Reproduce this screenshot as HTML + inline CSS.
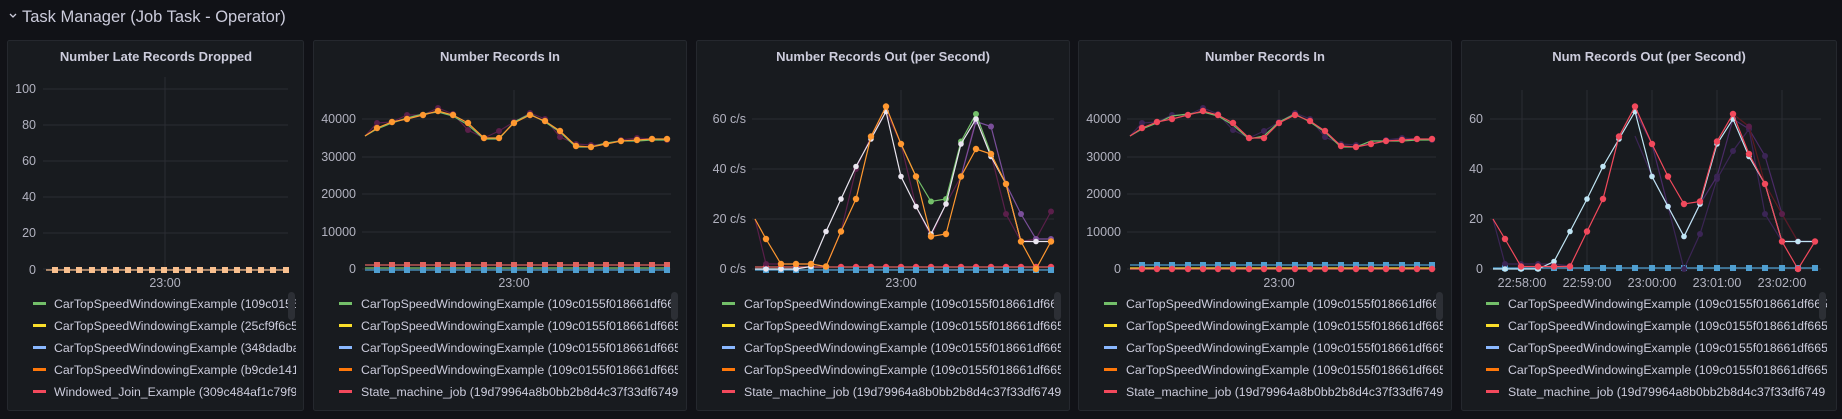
<!DOCTYPE html>
<html><head><meta charset="utf-8"><style>
html,body{margin:0;padding:0;background:#111217;width:1842px;height:419px;overflow:hidden}
svg{display:block;font-family:"Liberation Sans",sans-serif}
.pt{fill:#ccccdc;font-size:13px;font-weight:bold;text-anchor:middle}
.ax{fill:#ccccdc;fill-opacity:.85;font-size:12.5px}
.ar{text-anchor:end}
.am{text-anchor:middle}
.lg{fill:#ccccdc;font-size:12.3px}
.g{stroke:#2a2d33;stroke-width:1}
.s{fill:none;stroke-width:1.2}
</style></head><body>
<svg width="1842" height="419" viewBox="0 0 1842 419" xmlns="http://www.w3.org/2000/svg">
<defs>
<marker id="mo" markerUnits="userSpaceOnUse" markerWidth="8" markerHeight="8" refX="4" refY="4"><circle cx="4" cy="4" r="3.2" fill="#ff9830"/></marker>
<marker id="mr" markerUnits="userSpaceOnUse" markerWidth="8" markerHeight="8" refX="4" refY="4"><circle cx="4" cy="4" r="3.2" fill="#f2495c"/></marker>
<marker id="mw" markerUnits="userSpaceOnUse" markerWidth="8" markerHeight="8" refX="4" refY="4"><circle cx="4" cy="4" r="2.8" fill="#eae6f0"/></marker>
<marker id="mlb" markerUnits="userSpaceOnUse" markerWidth="8" markerHeight="8" refX="4" refY="4"><circle cx="4" cy="4" r="2.8" fill="#c0e6f5"/></marker>
<marker id="mg" markerUnits="userSpaceOnUse" markerWidth="8" markerHeight="8" refX="4" refY="4"><circle cx="4" cy="4" r="3" fill="#73bf69"/></marker>
<marker id="mp" markerUnits="userSpaceOnUse" markerWidth="8" markerHeight="8" refX="4" refY="4"><circle cx="4" cy="4" r="3" fill="#5a1f4a"/></marker>
<marker id="mpu" markerUnits="userSpaceOnUse" markerWidth="8" markerHeight="8" refX="4" refY="4"><circle cx="4" cy="4" r="3" fill="#3b2555"/></marker>
<marker id="mpk" markerUnits="userSpaceOnUse" markerWidth="8" markerHeight="8" refX="3" refY="3"><rect width="6" height="6" fill="#f9c08f"/></marker>
<marker id="msr" markerUnits="userSpaceOnUse" markerWidth="8" markerHeight="8" refX="3" refY="3"><rect width="6" height="6" fill="#e0645f"/></marker>
<marker id="msb" markerUnits="userSpaceOnUse" markerWidth="8" markerHeight="8" refX="3" refY="3"><rect width="6" height="6" fill="#4f9fd1"/></marker>
<marker id="mpurp" markerUnits="userSpaceOnUse" markerWidth="8" markerHeight="8" refX="4" refY="4"><circle cx="4" cy="4" r="3" fill="#7a4f9a"/></marker>
<clipPath id="c1"><rect x="8" y="290" width="288" height="115"/></clipPath>
<clipPath id="c2"><rect x="314" y="290" width="364" height="115"/></clipPath>
<clipPath id="c3"><rect x="697" y="290" width="364" height="115"/></clipPath>
<clipPath id="c4"><rect x="1079" y="290" width="364" height="115"/></clipPath>
<clipPath id="c5"><rect x="1462" y="290" width="365" height="115"/></clipPath>
</defs>

<path d="M10 14 L13 17 L16 14" fill="none" stroke="#ccccdc" stroke-width="1.3"/>
<text x="22" y="22" fill="#ccccdc" font-size="16.5px">Task Manager (Job Task - Operator)</text>

<g fill="#181b1f" stroke="#25282e">
<rect x="7.5" y="40.5" width="296" height="370" rx="2"/>
<rect x="313.5" y="40.5" width="373" height="370" rx="2"/>
<rect x="696.5" y="40.5" width="373" height="370" rx="2"/>
<rect x="1078.5" y="40.5" width="373" height="370" rx="2"/>
<rect x="1461.5" y="40.5" width="375" height="370" rx="2"/>
</g>
<text class="pt" x="156" y="61">Number Late Records Dropped</text>
<text class="pt" x="500" y="61">Number Records In</text>
<text class="pt" x="883" y="61">Number Records Out (per Second)</text>
<text class="pt" x="1265" y="61">Number Records In</text>
<text class="pt" x="1649" y="61">Num Records Out (per Second)</text>

<g class="g"><line x1="43" y1="89" x2="288" y2="89"/><line x1="43" y1="125" x2="288" y2="125"/><line x1="43" y1="161" x2="288" y2="161"/><line x1="43" y1="197" x2="288" y2="197"/><line x1="43" y1="233" x2="288" y2="233"/><line x1="43" y1="269" x2="288" y2="269"/><line x1="165" y1="77" x2="165" y2="272"/></g>
<g class="ax ar"><text x="36" y="93">100</text><text x="36" y="129">80</text><text x="36" y="165">60</text><text x="36" y="201">40</text><text x="36" y="237">20</text><text x="36" y="274">0</text></g>
<text class="ax am" x="165" y="287">23:00</text>
<polyline class="s" stroke="#f9c08f" marker-mid="url(#mpk)" marker-end="url(#mpk)" points="46,270 55,270 67,270 79,270 92,270 104,270 116,270 128,270 140,270 152,270 164,270 176,270 188,270 200,270 213,270 225,270 237,270 249,270 261,270 273,270 286,270"/>

<g class="g"><line x1="362" y1="119" x2="671" y2="119"/><line x1="362" y1="157" x2="671" y2="157"/><line x1="362" y1="194" x2="671" y2="194"/><line x1="362" y1="232" x2="671" y2="232"/><line x1="362" y1="269" x2="671" y2="269"/><line x1="514" y1="90" x2="514" y2="272"/></g>
<g class="ax ar"><text x="356" y="123">40000</text><text x="356" y="161">30000</text><text x="356" y="198">20000</text><text x="356" y="236">10000</text><text x="356" y="273">0</text></g>
<text class="ax am" x="514" y="287">23:00</text>
<polyline class="s" stroke="#e0645f" marker-mid="url(#msr)" marker-end="url(#msr)" points="365,265 377,265 392,265 407,265 423,265 438,265 453,265 468,265 484,265 499,265 514,265 530,265 545,265 560,265 576,265 591,265 606,265 621,265 637,265 652,265 667,265"/>
<polyline class="s" stroke="#73bf69" points="365,268 667,268"/>
<polyline class="s" stroke="#4f9fd1" marker-mid="url(#msb)" marker-end="url(#msb)" points="365,270 377,270 392,270 407,270 423,270 438,270 453,270 468,270 484,270 499,270 514,270 530,270 545,270 560,270 576,270 591,270 606,270 621,270 637,270 652,270 667,270"/>
<polyline class="s" stroke="#5a1f4a" marker-mid="url(#mp)" marker-end="url(#mp)" points="365,136 377,123 392,122 407,115 423,115 438,108 453,114 468,130 484,138 499,131 514,122 530,113 545,119 560,137 576,144 591,145 606,144 621,140 637,138 652,139 667,140"/>
<polyline class="s" stroke="#73bf69" points="365,136 377,129 392,123 407,118 423,114 438,112 453,116 468,125 484,139 499,139 514,122 530,114 545,122 560,132 576,147 591,147 606,143 621,141 637,141 652,140 667,140"/>
<polyline class="s" stroke="#ff9830" marker-mid="url(#mo)" marker-end="url(#mo)" points="365,136 377,128 392,122 407,119 423,115 438,111 453,115 468,123 484,138 499,138 514,123 530,115 545,121 560,131 576,146 591,147 606,144 621,141 637,140 652,139 667,139"/>

<g class="g"><line x1="752" y1="119" x2="1054" y2="119"/><line x1="752" y1="169" x2="1054" y2="169"/><line x1="752" y1="219" x2="1054" y2="219"/><line x1="752" y1="269" x2="1054" y2="269"/><line x1="901" y1="90" x2="901" y2="272"/></g>
<g class="ax ar"><text x="746" y="123">60 c/s</text><text x="746" y="173">40 c/s</text><text x="746" y="223">20 c/s</text><text x="746" y="273">0 c/s</text></g>
<text class="ax am" x="901" y="287">23:00</text>
<polyline class="s" stroke="#e0645f" marker-mid="url(#mr)" marker-end="url(#mr)" points="755,267 766,267 781,267 796,267 811,267 826,267 841,267 856,267 871,267 886,267 901,267 916,267 931,267 946,267 961,267 976,267 991,267 1006,267 1021,267 1036,267 1051,267"/>
<polyline class="s" stroke="#4f9fd1" marker-mid="url(#msb)" marker-end="url(#msb)" points="755,270 766,270 781,270 796,270 811,270 826,270 841,270 856,270 871,270 886,270 901,270 916,270 931,270 946,270 961,270 976,270 991,270 1006,270 1021,270 1036,270 1051,270"/>
<polyline class="s" stroke="#5a1f4a" marker-mid="url(#mp)" marker-end="url(#mp)" points="755,219 766,264 781,264 796,264 811,264 826,266.5 841,231.5 856,169 871,136.5 886,111.5 901,144 916,206.5 931,236.5 946,204 961,176.5 976,119 991,154 1006,214 1021,241.5 1036,239 1051,211.5"/>
<polyline class="s" stroke="#7a4f9a" marker-mid="url(#mpurp)" marker-end="url(#mpurp)" points="961,176.5 976,121.5 991,126.5 1006,184 1021,214 1036,239 1051,239"/>
<polyline class="s" stroke="#73bf69" marker-mid="url(#mg)" marker-end="url(#mg)" points="901,144 916,176.5 931,201.5 946,199 961,141.5 976,114 991,154 1006,184"/>
<polyline class="s" stroke="#eae6f0" marker-mid="url(#mw)" marker-end="url(#mw)" points="755,269 766,269 781,269 796,269 811,266.5 826,231.5 841,199 856,166.5 871,139 886,111.5 901,176.5 916,206.5 931,234 946,204 961,144 976,119 991,156.5 1006,184 1021,241.5 1036,241.5 1051,241.5"/>
<polyline class="s" stroke="#ff9830" marker-mid="url(#mo)" marker-end="url(#mo)" points="755,219 766,239 781,264 796,264 811,264 826,266.5 841,231.5 856,199 871,136.5 886,106.5 901,144 916,176.5 931,236.5 946,234 961,176.5 976,149 991,154 1006,184 1021,241.5 1036,269 1051,241.5"/>

<g class="g"><line x1="1127" y1="119" x2="1436" y2="119"/><line x1="1127" y1="157" x2="1436" y2="157"/><line x1="1127" y1="194" x2="1436" y2="194"/><line x1="1127" y1="232" x2="1436" y2="232"/><line x1="1127" y1="269" x2="1436" y2="269"/><line x1="1279" y1="90" x2="1279" y2="272"/></g>
<g class="ax ar"><text x="1121" y="123">40000</text><text x="1121" y="161">30000</text><text x="1121" y="198">20000</text><text x="1121" y="236">10000</text><text x="1121" y="273">0</text></g>
<text class="ax am" x="1279" y="287">23:00</text>
<polyline class="s" stroke="#4f9fd1" marker-mid="url(#msb)" marker-end="url(#msb)" points="1130,265 1142,265 1157,265 1172,265 1188,265 1203,265 1218,265 1233,265 1249,265 1264,265 1279,265 1295,265 1310,265 1325,265 1341,265 1356,265 1371,265 1386,265 1402,265 1417,265 1432,265"/>
<polyline class="s" stroke="#fade2a" points="1130,268 1432,268"/>
<polyline class="s" stroke="#e0645f" marker-mid="url(#mr)" marker-end="url(#mr)" points="1130,269 1142,269 1157,269 1172,269 1188,269 1203,269 1218,269 1233,269 1249,269 1264,269 1279,269 1295,269 1310,269 1325,269 1341,269 1356,269 1371,269 1386,269 1402,269 1417,269 1432,269"/>
<polyline class="s" stroke="#3b2555" marker-mid="url(#mpu)" marker-end="url(#mpu)" points="1130,136 1142,123 1157,122 1172,115 1188,115 1203,108 1218,114 1233,130 1249,138 1264,131 1279,122 1295,113 1310,119 1325,137 1341,144 1356,145 1371,144 1386,140 1402,138 1417,139 1432,140"/>
<polyline class="s" stroke="#73bf69" points="1130,136 1142,129 1157,123 1172,116 1188,114 1203,112 1218,116 1233,125 1249,139 1264,136 1279,122 1295,114 1310,122 1325,132 1341,147 1356,147 1371,141 1386,141 1402,141 1417,140 1432,140"/>
<polyline class="s" stroke="#f2495c" marker-mid="url(#mr)" marker-end="url(#mr)" points="1130,136 1142,128 1157,122 1172,119 1188,115 1203,111 1218,115 1233,123 1249,138 1264,138 1279,123 1295,115 1310,121 1325,131 1341,146 1356,147 1371,144 1386,141 1402,140 1417,139 1432,139"/>

<g class="g"><line x1="1490" y1="119" x2="1821" y2="119"/><line x1="1490" y1="169" x2="1821" y2="169"/><line x1="1490" y1="219" x2="1821" y2="219"/><line x1="1490" y1="269" x2="1821" y2="269"/>
<line x1="1522" y1="90" x2="1522" y2="272"/><line x1="1587" y1="90" x2="1587" y2="272"/><line x1="1652" y1="90" x2="1652" y2="272"/><line x1="1717" y1="90" x2="1717" y2="272"/><line x1="1782" y1="90" x2="1782" y2="272"/></g>
<g class="ax ar"><text x="1483" y="123">60</text><text x="1483" y="173">40</text><text x="1483" y="223">20</text><text x="1483" y="273">0</text></g>
<g class="ax am"><text x="1522" y="287">22:58:00</text><text x="1587" y="287">22:59:00</text><text x="1652" y="287">23:00:00</text><text x="1717" y="287">23:01:00</text><text x="1782" y="287">23:02:00</text></g>
<polyline class="s" stroke="#4f9fd1" marker-mid="url(#msb)" marker-end="url(#msb)" points="1493,268 1505,268 1521,268 1538,268 1554,268 1570,268 1587,268 1603,268 1619,268 1635,268 1652,268 1668,268 1684,268 1700,268 1717,268 1733,268 1749,268 1765,268 1782,268 1798,268 1815,268"/>
<polyline class="s" stroke="#3b2555" marker-mid="url(#mpu)" marker-end="url(#mpu)" points="1493,219 1505,264 1521,264 1538,264 1554,264 1570,266"/>
<polyline class="s" stroke="#3b2555" marker-mid="url(#mpu)" marker-end="url(#mpu)" points="1635,136 1652,176 1668,206.5 1684,269 1700,234 1717,179 1733,151 1749,129 1765,214 1782,241.5 1798,241.5 1815,241.5"/>
<polyline class="s" stroke="#4a2a66" marker-mid="url(#mpu)" marker-end="url(#mpu)" points="1635,111.5 1652,144 1668,206.5 1684,236.5 1700,204 1717,176.5 1733,119 1749,129 1765,156 1782,214 1798,241.5 1815,241.5"/>
<polyline class="s" stroke="#5c1a20" marker-mid="url(#mp)" marker-end="url(#mp)" points="1733,114 1749,126.5 1765,184 1782,214 1798,241.5"/>
<polyline class="s" stroke="#c0e6f5" marker-mid="url(#mlb)" marker-end="url(#mlb)" points="1493,269 1505,269 1521,269 1538,269 1554,261.5 1570,231.5 1587,199 1603,166.5 1619,139 1635,111.5 1652,176.5 1668,206.5 1684,236.5 1700,204 1717,144 1733,119 1749,156.5 1765,184 1782,241.5 1798,241.5 1815,241.5"/>
<polyline class="s" stroke="#f2495c" marker-mid="url(#mr)" marker-end="url(#mr)" points="1493,219 1505,239 1521,266.5 1538,266.5 1554,266.5 1570,266.5 1587,231.5 1603,199 1619,136.5 1635,106.5 1652,144 1668,176.5 1684,204 1700,201.5 1717,141.5 1733,114 1749,154 1765,184 1782,241.5 1798,269 1815,241.5"/>

<g clip-path="url(#c1)">
<rect x="33" y="302" width="13" height="3" fill="#73bf69"/><text class="lg" x="54" y="308">CarTopSpeedWindowingExample (109c0155f018661df665</text>
<rect x="33" y="324" width="13" height="3" fill="#fade2a"/><text class="lg" x="54" y="330">CarTopSpeedWindowingExample (25cf9f6c5a8b</text>
<rect x="33" y="346" width="13" height="3" fill="#8ab8ff"/><text class="lg" x="54" y="352">CarTopSpeedWindowingExample (348dadba1c2</text>
<rect x="33" y="368" width="13" height="3" fill="#ff780a"/><text class="lg" x="54" y="374">CarTopSpeedWindowingExample (b9cde1413fa</text>
<rect x="33" y="390" width="13" height="3" fill="#f2495c"/><text class="lg" x="54" y="396">Windowed_Join_Example (309c484af1c79f9e</text>
</g>
<rect x="288" y="292" width="7" height="28" rx="3.5" fill="#2c2f35"/>
<g clip-path="url(#c2)">
<rect x="339" y="302" width="13" height="3" fill="#73bf69"/><text class="lg" x="361" y="308">CarTopSpeedWindowingExample (109c0155f018661df665</text>
<rect x="339" y="324" width="13" height="3" fill="#fade2a"/><text class="lg" x="361" y="330">CarTopSpeedWindowingExample (109c0155f018661df665</text>
<rect x="339" y="346" width="13" height="3" fill="#8ab8ff"/><text class="lg" x="361" y="352">CarTopSpeedWindowingExample (109c0155f018661df665</text>
<rect x="339" y="368" width="13" height="3" fill="#ff780a"/><text class="lg" x="361" y="374">CarTopSpeedWindowingExample (109c0155f018661df665</text>
<rect x="339" y="390" width="13" height="3" fill="#f2495c"/><text class="lg" x="361" y="396">State_machine_job (19d79964a8b0bb2b8d4c37f33df6749</text>
</g>
<rect x="671" y="292" width="7" height="28" rx="3.5" fill="#2c2f35"/>
<g clip-path="url(#c3)">
<rect x="722" y="302" width="13" height="3" fill="#73bf69"/><text class="lg" x="744" y="308">CarTopSpeedWindowingExample (109c0155f018661df665</text>
<rect x="722" y="324" width="13" height="3" fill="#fade2a"/><text class="lg" x="744" y="330">CarTopSpeedWindowingExample (109c0155f018661df665</text>
<rect x="722" y="346" width="13" height="3" fill="#8ab8ff"/><text class="lg" x="744" y="352">CarTopSpeedWindowingExample (109c0155f018661df665</text>
<rect x="722" y="368" width="13" height="3" fill="#ff780a"/><text class="lg" x="744" y="374">CarTopSpeedWindowingExample (109c0155f018661df665</text>
<rect x="722" y="390" width="13" height="3" fill="#f2495c"/><text class="lg" x="744" y="396">State_machine_job (19d79964a8b0bb2b8d4c37f33df6749</text>
</g>
<rect x="1054" y="292" width="7" height="28" rx="3.5" fill="#2c2f35"/>
<g clip-path="url(#c4)">
<rect x="1104" y="302" width="13" height="3" fill="#73bf69"/><text class="lg" x="1126" y="308">CarTopSpeedWindowingExample (109c0155f018661df665</text>
<rect x="1104" y="324" width="13" height="3" fill="#fade2a"/><text class="lg" x="1126" y="330">CarTopSpeedWindowingExample (109c0155f018661df665</text>
<rect x="1104" y="346" width="13" height="3" fill="#8ab8ff"/><text class="lg" x="1126" y="352">CarTopSpeedWindowingExample (109c0155f018661df665</text>
<rect x="1104" y="368" width="13" height="3" fill="#ff780a"/><text class="lg" x="1126" y="374">CarTopSpeedWindowingExample (109c0155f018661df665</text>
<rect x="1104" y="390" width="13" height="3" fill="#f2495c"/><text class="lg" x="1126" y="396">State_machine_job (19d79964a8b0bb2b8d4c37f33df6749</text>
</g>
<rect x="1436" y="292" width="7" height="28" rx="3.5" fill="#2c2f35"/>
<g clip-path="url(#c5)">
<rect x="1486" y="302" width="13" height="3" fill="#73bf69"/><text class="lg" x="1508" y="308">CarTopSpeedWindowingExample (109c0155f018661df665</text>
<rect x="1486" y="324" width="13" height="3" fill="#fade2a"/><text class="lg" x="1508" y="330">CarTopSpeedWindowingExample (109c0155f018661df665</text>
<rect x="1486" y="346" width="13" height="3" fill="#8ab8ff"/><text class="lg" x="1508" y="352">CarTopSpeedWindowingExample (109c0155f018661df665</text>
<rect x="1486" y="368" width="13" height="3" fill="#ff780a"/><text class="lg" x="1508" y="374">CarTopSpeedWindowingExample (109c0155f018661df665</text>
<rect x="1486" y="390" width="13" height="3" fill="#f2495c"/><text class="lg" x="1508" y="396">State_machine_job (19d79964a8b0bb2b8d4c37f33df6749</text>
</g>
<rect x="1819" y="292" width="7" height="28" rx="3.5" fill="#2c2f35"/>
</svg>
</body></html>
